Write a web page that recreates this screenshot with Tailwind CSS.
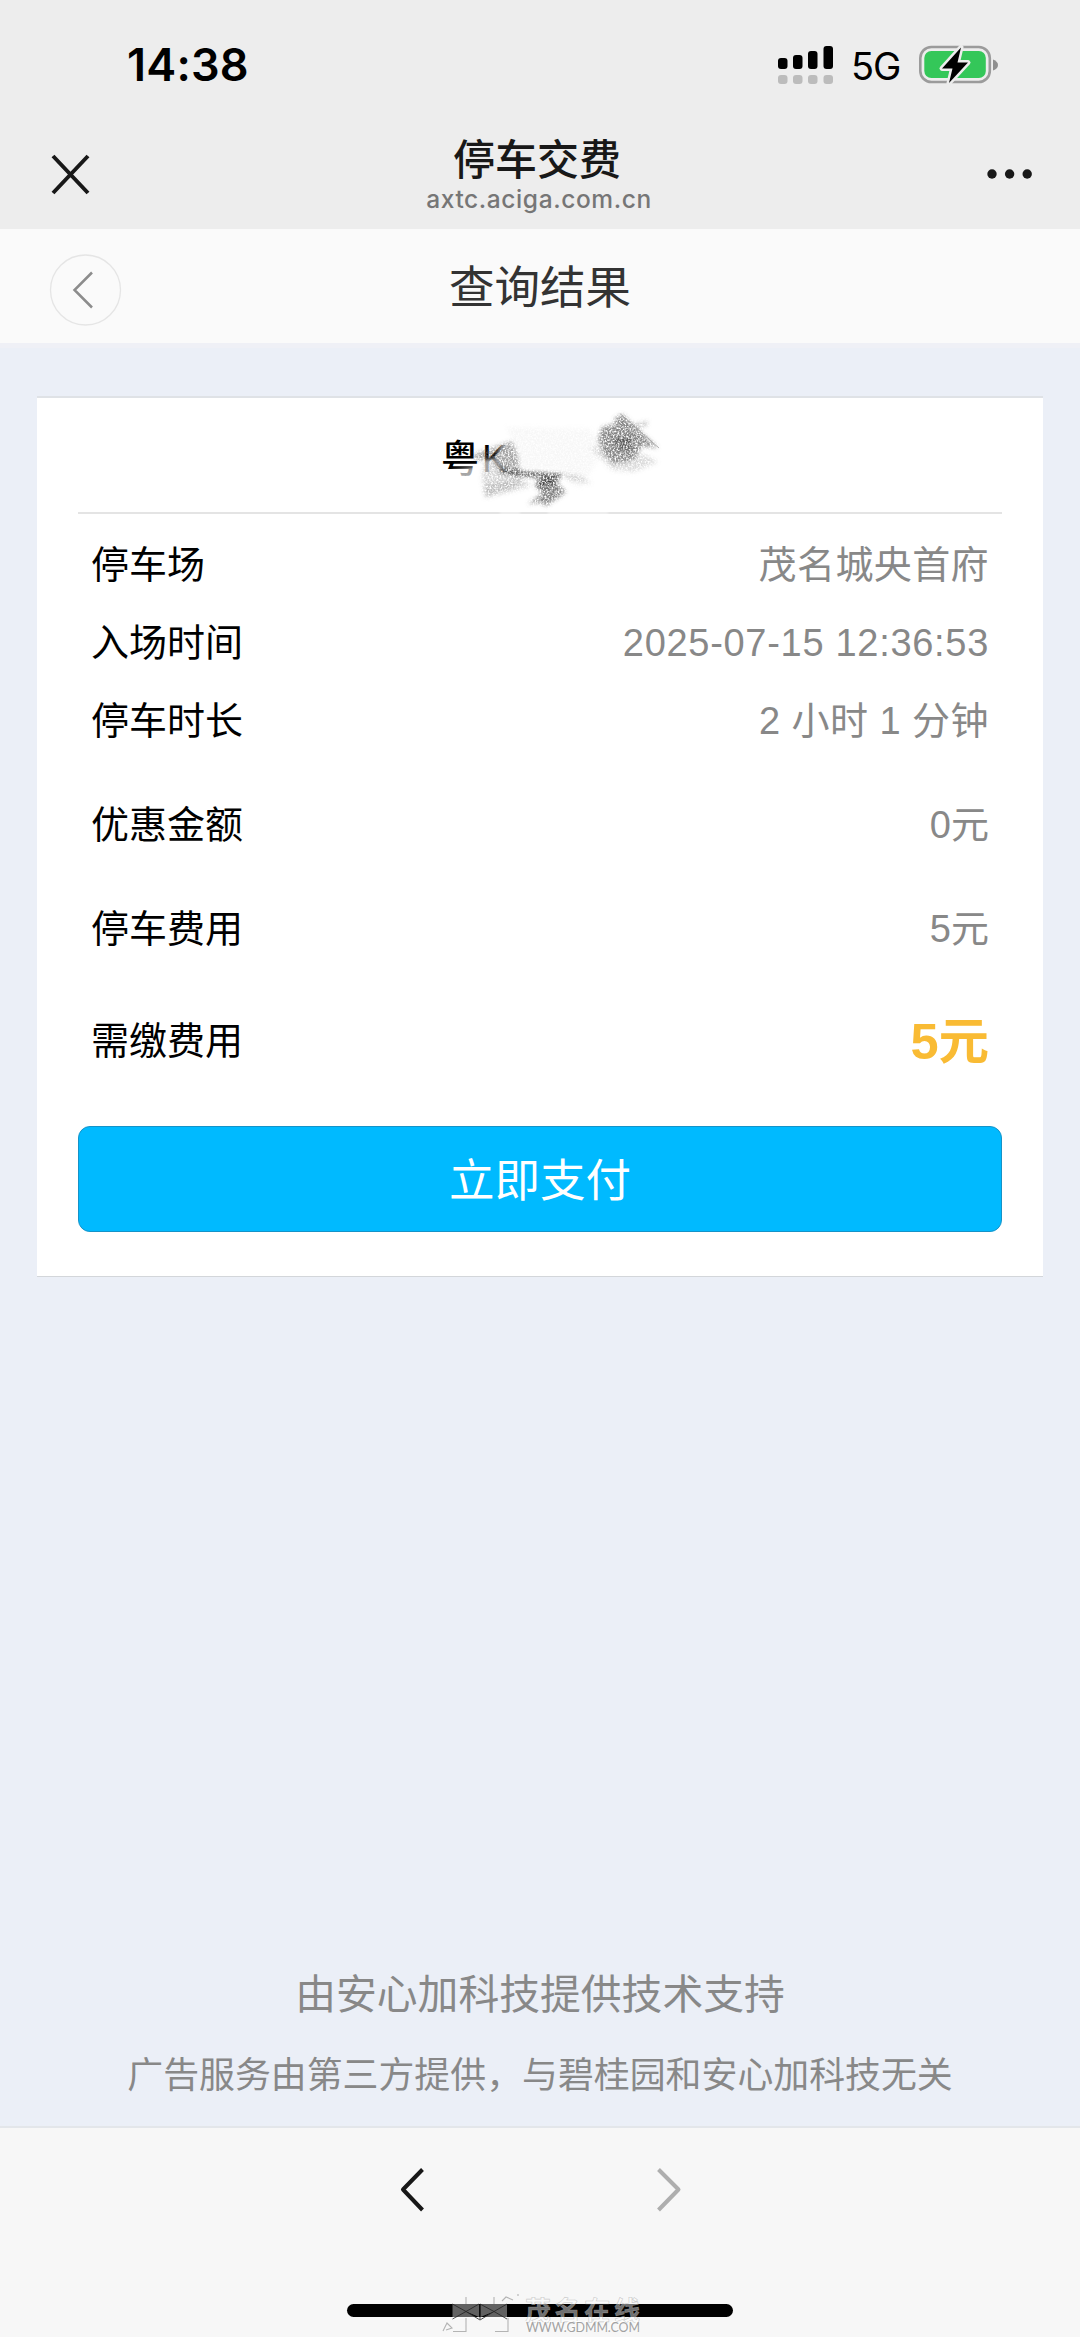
<!DOCTYPE html>
<html lang="zh-CN">
<head>
<meta charset="utf-8">
<title>停车交费</title>
<script src="https://cdn.jsdelivr.net/npm/@tailwindcss/browser@4"></script>
</head>
<body class="flex h-[2337px] w-[1080px] flex-col overflow-hidden bg-[#ebeff7] font-['Liberation_Sans','Noto_Sans_CJK_SC',sans-serif]">
  <!-- Status bar and browser header -->
  <header class="h-[229px] bg-[#ededed]">
    <div class="flex h-[129px] items-center justify-between pl-[127px] pr-[80px]">
      <div class="font-['Inter',sans-serif] text-[45px] leading-none font-semibold tracking-[0.200px] text-black">14:38</div>
      <div class="flex items-center">
        <svg class="block h-[40px] w-[56px]" viewBox="0 0 56 40">
          <g fill="#000"><rect x="0" y="13" width="9.5" height="11" rx="3"/><rect x="15" y="10" width="9.5" height="14" rx="3"/><rect x="30" y="6" width="9.5" height="18" rx="3"/><rect x="45.500" y="1" width="9.500" height="23" rx="3"/></g>
          <g fill="#bcbcbc"><rect x="0" y="30" width="9.5" height="9" rx="3"/><rect x="15" y="30" width="9.5" height="9" rx="3"/><rect x="30" y="30" width="9.5" height="9" rx="3"/><rect x="45.500" y="30" width="9.500" height="9" rx="3"/></g>
        </svg>
        <span class="ml-[17px] w-[50px] pt-[3px] font-['Inter',sans-serif] text-[38px] leading-none tracking-[-1.200px] text-black">5G</span>
        <svg class="ml-[18px] block h-[46px] w-[81px]" viewBox="0 0 81 46">
          <rect x="1.300" y="5" width="69.500" height="35" rx="11" fill="none" stroke="#9b9b9b" stroke-width="2.600"/>
          <rect x="5.300" y="9" width="61.500" height="27" rx="7" fill="#34c759"/>
          <path d="M74 17.500q5 2 5 5.500t-5 5.500z" fill="#8f8f8f"/>
          <path d="M42 5.500 23 26.500h10.500L30 41 49 20.500H38.500z" fill="#000" stroke="#ededed" stroke-width="5" stroke-linejoin="round" paint-order="stroke"/>
        </svg>
      </div>
    </div>
    <div class="flex h-[100px] items-start justify-between pl-[49px] pr-[48px]">
      <svg class="mt-[24px] block size-[43px]" viewBox="0 0 43 43"><path d="M4 3 39 40M39 3 4 40" stroke="#181818" stroke-width="4"/></svg>
      <div class="flex flex-col items-center">
        <h1 class="mt-[6px] mr-[4px] font-['Noto_Sans_CJK_SC',sans-serif] text-[42px] leading-[44px] font-medium text-[#181818]">停车交费</h1>
        <p class="mt-[5px] font-['Inter',sans-serif] text-[24.500px] leading-[30px] font-medium tracking-[0.600px] text-[#767676]">axtc.aciga.com.cn</p>
      </div>
      <svg class="mt-[35px] block h-[20px] w-[46px]" viewBox="0 0 46 20" fill="#181818"><circle cx="6" cy="10" r="4.700"/><circle cx="23.600" cy="10" r="4.700"/><circle cx="41.200" cy="10" r="4.700"/></svg>
    </div>
  </header>

  <!-- Page title bar -->
  <div class="grid h-[114px] grid-cols-[140px_1fr_140px] items-center bg-[#fafafa]">
    <svg class="ml-[49px] mt-[8px] block size-[73px]" viewBox="0 0 73 73" fill="none"><circle cx="36.500" cy="36" r="35" stroke="#e5e5e5" stroke-width="1.300"/><path d="M43 18.500 25.500 36 43 53.500" stroke="#8c8c8c" stroke-width="2.500"/></svg>
    <h2 class="pt-[5px] text-center text-[45.500px] leading-[60px] text-[#333]">查询结果</h2>
  </div>
  <div class="h-[5px] bg-[#eff0f6]"></div>

  <!-- Bill card -->
  <main class="mx-[37px] mt-[48px] h-[881px] border-t-2 border-b border-t-[#dfe2e6] border-b-[#d3d6da] bg-white px-[41px]">
    <div class="relative flex h-[116px] items-center border-b-2 border-[#e4e4e4] pl-[363px]">
      <span class="mt-[8px] text-[38px] leading-none font-medium text-black">粤<span class="ml-[3px]">K</span></span>
      <!-- Pencil smudge that hides the plate number -->
      <svg class="absolute left-[352px] top-0 h-[118px] w-[260px]" viewBox="0 0 260 118">
        <defs>
          <filter id="grain" x="-10%" y="-10%" width="120%" height="120%">
            <feTurbulence type="fractalNoise" baseFrequency="0.600" numOctaves="3" seed="9" result="n"/>
            <feColorMatrix in="n" type="matrix" values="0 0 0 0 0  0 0 0 0 0  0 0 0 0 0  0 0 0 2.600 -0.600" result="m"/>
            <feGaussianBlur in="SourceGraphic" stdDeviation="2" result="s"/>
            <feComposite in="s" in2="m" operator="in" result="g"/>
            <feGaussianBlur in="g" stdDeviation="0.400"/>
          </filter>
          <filter id="soft"><feGaussianBlur stdDeviation="1.500"/></filter>
        </defs>
        <g filter="url(#soft)" fill="#fff">
          <path d="M22 72 50 68 54 62 66 60 72 42 180 25 180 96 60 100 24 90z" opacity=".65"/>
          <path d="M78 28 175 26 178 92 88 84 84 50z"/>
          <path d="M70 112h20v6H70zM118 112h60v6h-60z" opacity=".4"/>
        </g>
        <g filter="url(#grain)">
          <path d="M44 56 82 43 88 58 90 76 70 74 62 62 44 62z" fill="#666" opacity=".6"/>
          <path d="M54 64 74 62 92 78 88 88 55 98 52 80z" fill="#999" opacity=".4"/>
          <path d="M55 100 102 88 90 80 54 88z" fill="#888" opacity=".35"/>
          <path d="M70 70 88 73 132 76 130 81 90 78 70 75z" fill="#333" opacity=".9"/>
          <path d="M128 74 150 78 162 86 140 82z" fill="#777" opacity=".35"/>
          <path d="M106 82 126 76 128 86 136 94 116 108 110 104 98 106 112 96z" fill="#555" opacity=".75"/>
          <path d="M105 86 122 80 124 86 108 91z" fill="#222" opacity=".8"/>
          <path d="M172 29 186 26 184 21 192 16 228 50 212 48 204 62 184 66 174 56 168 42z" fill="#555" opacity=".7"/>
          <path d="M184 38 202 40 200 52 188 50z" fill="#222" opacity=".5"/>
          <path d="M160 50 172 48 178 62 214 56 228 64 204 74 182 72z" fill="#888" opacity=".3"/>
          <path d="M204 26 218 23 217 28 206 30z" fill="#888" opacity=".5"/>
          <path d="M76 29 160 31 174 50 162 72 150 90 138 84 134 72 90 70 84 44z" fill="#bbb" opacity=".12"/>
        </g>
        <path d="M190.500 16 229 50" stroke="#888" stroke-width="1" opacity=".6"/>
      </svg>
    </div>
    <dl class="px-[13px] text-[38px]">
      <div class="mt-[12px] flex h-[78px] items-center justify-between"><dt class="text-black">停车场</dt><dd class="tracking-[0.400px] text-[#888]">茂名城央首府</dd></div>
      <div class="flex h-[78px] items-center justify-between"><dt class="text-black">入场时间</dt><dd class="tracking-[0.700px] text-[#888]">2025-07-15 12:36:53</dd></div>
      <div class="flex h-[78px] items-center justify-between"><dt class="text-black">停车时长</dt><dd class="tracking-[0.450px] text-[#888]">2 小时 1 分钟</dd></div>
      <div class="mt-[13px] flex h-[104px] items-center justify-between"><dt class="text-black">优惠金额</dt><dd class="text-[#888]">0元</dd></div>
      <div class="flex h-[104px] items-center justify-between"><dt class="text-black">停车费用</dt><dd class="text-[#888]">5元</dd></div>
      <div class="flex h-[121px] items-center justify-between"><dt class="text-black">需缴费用</dt><dd class="text-[50.500px] leading-[70px] font-bold text-[#f9bb34]">5元</dd></div>
    </dl>
    <button class="mt-[24px] flex h-[106px] w-[924px] items-center justify-center rounded-[12px] border border-[#1593c8] bg-[#00baff] pt-[6px] text-[45.500px] text-white">立即支付</button>
  </main>

  <!-- Provider notes -->
  <footer class="mt-auto flex h-[171px] flex-col items-center text-[#888]">
    <p class="mt-[10px] text-[40.800px] leading-[60px]">由安心加科技提供技术支持</p>
    <p class="mt-[24px] text-[35.900px] leading-[54px]">广告服务由第三方提供，与碧桂园和安心加科技无关</p>
  </footer>

  <!-- Browser toolbar -->
  <nav class="relative h-[211px] border-t-2 border-[#e3e6ea] bg-[#f7f7f7]">
    <div class="flex justify-between pl-[398px] pr-[396px] pt-[37px]">
      <svg class="block h-[50px] w-[30px]" viewBox="0 0 30 50" fill="none"><path d="M24.500 4.500 5 24.500 24.500 45" stroke="#181818" stroke-width="4" stroke-linejoin="round"/></svg>
      <svg class="block h-[50px] w-[30px]" viewBox="0 0 30 50" fill="none"><path d="M4.500 4.500 24.500 24.500 4.500 45" stroke="#aeaeae" stroke-width="4" stroke-linejoin="round"/></svg>
    </div>
    <div class="mx-auto mt-[89px] h-[13px] w-[386px] rounded-full bg-black"></div>
    <!-- Embossed site watermark -->
    <svg class="absolute bottom-0 left-[435px] h-[52px] w-[215px]" viewBox="0 0 215 52">
      <path d="M17.500 19 31 26.500 17.500 34zM31 26.500 17.500 19H44zM44 19v13L31 26.500zM17.500 34 31 26.500 44 34zM45.500 19v13L59 26.500zM45.500 19H72L59 26.500zM72 19v15L59 26.500zM45.500 34 59 26.500 72 34z" fill="#fff" opacity=".38"/>
      <path d="M17.500 19 31 26.500 44 19M17.500 34 31 26.500 45 35 59 26.500 72 34M45 19 59 26.500 72 19M45 19v15" fill="none" stroke="#222" stroke-width=".8"/>
      <g fill="none" stroke="#b4b4b4" stroke-width="1.100"><path d="M31 12v7M31 33v13.500H18M59 12v7M73 33v13.500H60M8 46l4-8 5 5-6 2M67 16l4-4 7 3M83 9v2"/></g>
      <text x="90" y="34.500" textLength="115" class="font-['Noto_Sans_CJK_SC',sans-serif] text-[26px] font-bold" fill="#fff" fill-opacity=".45" stroke="#aaa" stroke-opacity=".6" stroke-width=".6">茂名在线</text>
      <text x="91" y="46.500" textLength="114" lengthAdjust="spacingAndGlyphs" class="font-['Lato',sans-serif] text-[13.500px] [text-shadow:-1px_-1px_0_#fff]" fill="#a2a2a2">WWW.GDMM.COM</text>
    </svg>
  </nav>
</body>
</html>
